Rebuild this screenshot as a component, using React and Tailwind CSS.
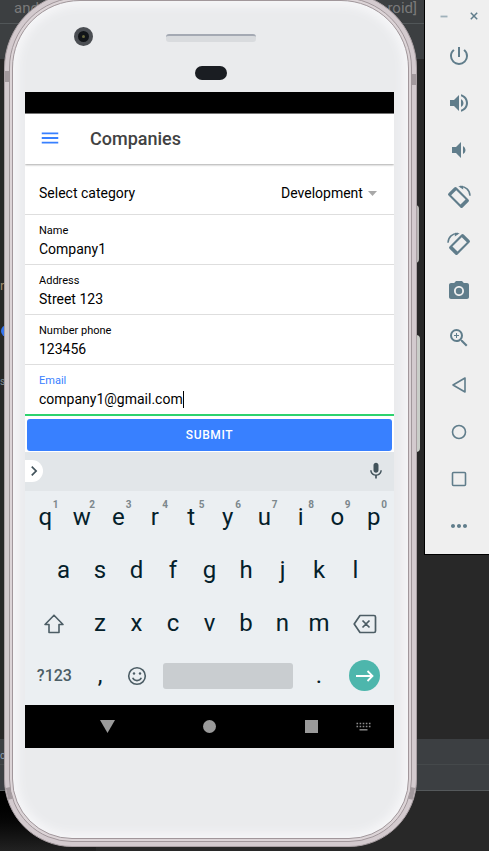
import { useState } from "react";
import {
  MdCameraAlt,
  MdChevronRight,
  MdMenu,
  MdMic,
  MdMoreHoriz,
  MdPowerSettingsNew,
  MdVolumeDown,
  MdVolumeUp,
  MdZoomIn,
} from "react-icons/md";

function Desktop() {
  return (
    <div className="absolute inset-0 overflow-hidden bg-[#282828]">
      <div className="absolute inset-x-0 top-0 h-[59px] bg-[#3c3f41]">
        <div className="flex justify-between pl-[14px] pr-[72px] text-[15px] leading-4 text-[#7a7a7a]">
          <span>and</span>
          <span>roid]</span>
        </div>
        <div className="mt-[7px] h-px bg-[#515658]" />
      </div>
      <span className="absolute left-0 top-[276px] text-[13px] text-[#a18a6c]">r</span>
      <span className="absolute left-px top-[325px] size-3 rounded-full bg-[#3574f0]" />
      <span className="absolute left-0 top-[374px] text-[10px] text-[#7d8a94]">s</span>
      <div className="absolute inset-x-0 top-[739px] h-[52px] border-b border-[#55595b] bg-[#3c3f42]">
        <div className="h-[26px] border-b border-[#45494b]" />
      </div>
      <span className="absolute left-0 top-[748px] text-[10px] text-[#8b9bb0]">o</span>
      <div className="absolute bottom-0 left-0 top-[791px] w-24 bg-linear-to-b from-black to-[#222]" />
    </div>
  );
}

function RotateIcon({ flip }) {
  return (
    <svg width="24" height="24" viewBox="0 0 24 24" className={flip ? "-scale-x-100" : ""} aria-hidden="true">
      <g transform="rotate(-45 11.5 12.5)">
        <path
          fill="currentColor"
          fillRule="evenodd"
          d="M7.4 2.500h8.200a1.600 1.600 0 0 1 1.600 1.600v16.800a1.600 1.600 0 0 1-1.600 1.600h-8.200a1.600 1.600 0 0 1-1.600-1.600V4.100a1.600 1.600 0 0 1 1.600-1.600zM7.900 5.700v13.200h7.200V5.700z"
        />
      </g>
      <path d="M13 1.600C18.500 1.200 22.800 5 23 10.800" fill="none" stroke="currentColor" strokeWidth="1.500" />
      <path d="M11.300 1.300l4.700-.600.200 3.800z" fill="currentColor" />
    </svg>
  );
}

function OutlineIcon({ children }) {
  return (
    <svg width="24" height="24" viewBox="0 0 24 24" fill="none" stroke="currentColor" strokeWidth="1.600" strokeLinejoin="round" aria-hidden="true">
      {children}
    </svg>
  );
}

const tools = [
  ["Power", <MdPowerSettingsNew size={24} />],
  ["Volume up", <MdVolumeUp size={24} />],
  ["Volume down", <MdVolumeDown size={24} />],
  ["Rotate left", <RotateIcon />],
  ["Rotate right", <RotateIcon flip />],
  ["Take screenshot", <MdCameraAlt size={24} />],
  ["Zoom", <MdZoomIn size={24} />],
  ["Back", <OutlineIcon><path d="M18 5v14L6 12z" /></OutlineIcon>],
  ["Home", <OutlineIcon><circle cx="12" cy="12" r="6.500" /></OutlineIcon>],
  ["Overview", <OutlineIcon><rect x="5.500" y="5.500" width="13" height="13" rx="1" /></OutlineIcon>],
  ["More", <MdMoreHoriz size={24} />],
];

function EmulatorToolbar() {
  return (
    <aside className="w-[65px] shrink-0 self-start border-b border-l border-black bg-[#efefef] pb-[5px] pl-1 text-[#607d8b]">
      <div className="grid h-8 grid-cols-2">
        <button aria-label="Minimize" className="flex items-center justify-center">
          <svg width="8" height="8" viewBox="0 0 8 8" aria-hidden="true">
            <path d="M.5 4.500h7" stroke="#9fb1ba" strokeWidth="1.800" />
          </svg>
        </button>
        <button aria-label="Close" className="flex items-center justify-center">
          <svg width="8" height="8" viewBox="0 0 8 8" aria-hidden="true">
            <path d="M.8.8l6.400 6.400M7.200.8L.8 7.200" stroke="currentColor" strokeWidth="1.500" />
          </svg>
        </button>
      </div>
      {tools.map(([name, icon]) => (
        <button key={name} aria-label={name} className="flex h-[47px] w-full items-center justify-center">
          {icon}
        </button>
      ))}
    </aside>
  );
}

function Field({ id, label, type = "text", value, onChange, active }) {
  return (
    <div className={`pl-[14px] pt-[9px] ${active ? "h-[51px] border-b-2 border-[#2dd36f]" : "h-[50px] border-b border-[#dedede]"}`}>
      <label htmlFor={id} className={`block text-[11px] leading-[14px] ${active ? "text-[#3880ff]" : "text-black"}`}>
        {label}
      </label>
      <div className="flex h-[22px] items-center">
        <input
          id={id}
          type={type}
          value={value}
          onChange={(e) => onChange(e.target.value)}
          className="field-sizing-content min-w-0 max-w-full bg-transparent text-[14px] leading-5 text-black outline-none"
        />
        {active && <span className="h-[17px] w-px bg-black" />}
      </div>
    </div>
  );
}

function CompanyForm() {
  const [form, setForm] = useState({
    name: "Company1",
    address: "Street 123",
    phone: "123456",
    email: "company1@gmail.com",
  });
  const set = (key) => (value) => setForm({ ...form, [key]: value });
  return (
    <form className="bg-white pt-[5px]" onSubmit={(e) => e.preventDefault()}>
      <div className="flex h-[46px] items-center justify-between border-b border-[#dedede] pl-[14px] pr-[17px] pt-1 text-[14px] text-black">
        <label htmlFor="category">Select category</label>
        <div className="flex items-center gap-[5px]">
          <select id="category" className="appearance-none bg-transparent outline-none">
            <option>Development</option>
          </select>
          <svg width="9" height="5" viewBox="0 0 9 5" aria-hidden="true">
            <path d="M0 0h9L4.500 5z" fill="#a8a8a8" />
          </svg>
        </div>
      </div>
      <Field id="name" label="Name" value={form.name} onChange={set("name")} />
      <Field id="address" label="Address" value={form.address} onChange={set("address")} />
      <Field id="phone" label="Number phone" type="tel" value={form.phone} onChange={set("phone")} />
      <Field id="email" label="Email" value={form.email} onChange={set("email")} active />
      <div className="px-0.5 pb-px pt-[3px]">
        <button type="submit" className="block h-8 w-full rounded-[3px] bg-[#3880ff] text-[12px] font-medium tracking-wider text-white">
          SUBMIT
        </button>
      </div>
    </form>
  );
}

const letter = "relative col-span-2 flex items-center justify-center pb-0.5 text-[24px] leading-none text-[#04202a]";
const wide = "col-span-3 flex items-center justify-center text-[#4c5d65]";

function Keyboard() {
  return (
    <section aria-label="Keyboard" className="bg-[#ebeff2]">
      <div className="flex h-[39px] items-center justify-between bg-[#e2e6e9] pb-px pr-2 text-[#42535b]">
        <button aria-label="Expand" className="flex h-[22px] w-[18px] items-center justify-center rounded-r-full bg-white">
          <MdChevronRight size={20} className="shrink-0" />
        </button>
        <button aria-label="Voice input">
          <MdMic size={20} />
        </button>
      </div>
      <div className="px-0.5 pb-0.5">
        <div className="grid h-[53px] grid-cols-20">
          {[..."qwertyuiop"].map((key, i) => (
            <button key={key} className={letter}>
              {key}
              <span className="absolute right-[5px] top-[9px] text-[10px] font-bold text-[#7c878c]">{(i + 1) % 10}</span>
            </button>
          ))}
        </div>
        <div className="grid h-[53px] grid-cols-20">
          {[..."asdfghjkl"].map((key) => (
            <button key={key} className={`${letter} first:col-start-2`}>{key}</button>
          ))}
        </div>
        <div className="grid h-[53px] grid-cols-20">
          <button aria-label="Shift" className={wide}>
            <svg width="22" height="20" viewBox="0 0 22 20" fill="none" stroke="currentColor" strokeWidth="1.600" strokeLinejoin="round" aria-hidden="true">
              <path d="M11 1.200L20 10.500h-4V18.500H6V10.500H2z" />
            </svg>
          </button>
          {[..."zxcvbnm"].map((key) => (
            <button key={key} className={letter}>{key}</button>
          ))}
          <button aria-label="Delete" className={wide}>
            <svg width="24" height="20" viewBox="0 0 24 20" fill="none" stroke="currentColor" strokeWidth="1.700" strokeLinejoin="round" aria-hidden="true">
              <path d="M7 1.500h14a1.500 1.500 0 0 1 1.500 1.500v14a1.500 1.500 0 0 1-1.500 1.500H7L1.200 10zM9.500 6.500l7 7M16.500 6.500l-7 7" />
            </svg>
          </button>
        </div>
        <div className="grid h-[53px] grid-cols-20 pb-0.5">
          <button className={`${wide} text-[16px] font-medium`}>?123</button>
          <button className={letter}>,</button>
          <button aria-label="Emoji" className="col-span-2 flex items-center justify-center text-[#4c5d65]">
            <svg width="20" height="20" viewBox="0 0 20 20" fill="none" stroke="currentColor" strokeWidth="1.600" aria-hidden="true">
              <circle cx="10" cy="10" r="8.300" />
              <path d="M5.700 11.800a4.700 4.700 0 0 0 8.600 0" />
              <circle cx="7" cy="7.500" r="1.200" fill="currentColor" stroke="none" />
              <circle cx="13" cy="7.500" r="1.200" fill="currentColor" stroke="none" />
            </svg>
          </button>
          <button aria-label="Space" className="col-span-8 mx-2 h-[26px] self-center rounded-[3px] bg-[#c9cdd0]" />
          <button className={letter}>.</button>
          <button aria-label="Next" className={wide}>
            <span className="flex size-[31px] items-center justify-center rounded-full bg-[#4db6ac] text-white">
              <svg width="18" height="12" viewBox="0 0 18 12" fill="none" stroke="currentColor" strokeWidth="1.800" aria-hidden="true">
                <path d="M0 6h16.500M11.500 1l5 5-5 5" />
              </svg>
            </span>
          </button>
        </div>
      </div>
    </section>
  );
}

function NavigationBar() {
  const item = "flex h-full w-[50px] items-center justify-center";
  return (
    <nav className="flex h-[43px] items-center bg-black pl-[57px] pr-1.5">
      <div className="flex h-full flex-1 justify-between">
        <button aria-label="Hide keyboard" className={item}>
          <svg width="15" height="13" viewBox="0 0 15 13" aria-hidden="true">
            <path d="M0 0h15L7.500 13z" fill="#9a9a9a" />
          </svg>
        </button>
        <button aria-label="Home screen" className={item}>
          <span className="size-[13px] rounded-full bg-[#9a9a9a]" />
        </button>
        <button aria-label="Recent apps" className={item}>
          <span className="size-[13px] bg-[#9a9a9a]" />
        </button>
      </div>
      <button aria-label="Switch keyboard" className={`${item} ml-0.5`}>
        <svg width="15" height="9" viewBox="0 0 15 9" fill="none" stroke="#8e8e8e" aria-hidden="true">
          <path d="M.5 1.500h14M.5 4.500h14" strokeWidth="1.500" strokeDasharray="1.600 1.500" />
          <path d="M3.500 7.800h8" strokeWidth="1.400" />
        </svg>
      </button>
    </nav>
  );
}

function Phone() {
  const band = "absolute w-[8px] bg-[#a39a9e]";
  return (
    <div className="relative z-10 -mt-2 mb-1 ml-1 mr-[7px] flex-1">
      <span className="absolute -right-0.5 top-[213px] h-[58px] w-1 rounded-r-sm bg-[#b9b8b6]" />
      <span className="absolute -right-[3px] top-[343px] h-[117px] w-1 rounded-r-sm bg-[#c9cdc8]" />
      <div className="relative rounded-b-[68px] rounded-t-[76px] border border-[#aaa0a4] bg-[#d3cace] p-1">
        <span className={`${band} left-0 top-[78px] h-[11px]`} />
        <span className={`${band} right-0 top-[81px] h-[11px]`} />
        <span className={`${band} left-[2px] top-[794px] h-[12px] -rotate-12`} />
        <span className={`${band} right-[2px] top-[794px] h-[12px] rotate-12`} />
        <div className="relative rounded-b-[63px] rounded-t-[71px] border border-[#a1979b] bg-[#dcd4d7] p-0.5">
          <div className="rounded-b-[60px] rounded-t-[68px] border border-[#a1979b] bg-[#eaebed] pl-3 pr-[14px] shadow-[inset_0_0_10px_5px_#f6f6f8]">
            <div className="-ml-3 -mr-[14px] h-[91px] pt-[26px]">
              <div className="grid grid-cols-[1fr_90px_1fr] items-center">
                <span className="ml-[61px] flex size-[19px] items-center justify-center rounded-full border-4 border-[#4b4e53] bg-[#111418]">
                  <span className="size-[3px] rounded-full bg-[#66653c]" />
                </span>
                <span className="mt-0.5 h-2 rounded-[3px] border-t-2 border-[#a4a9b3] bg-[#d9dbde]" />
              </div>
              <div className="mx-auto mt-5 h-[14px] w-8 rounded-full bg-[#1a1d22]" />
            </div>
            <main className="overflow-hidden bg-white">
              <div className="h-[22px] border-b border-[#777] bg-black" />
              <header className="relative flex h-[50px] items-center bg-white pb-0.5 pl-[14px] shadow-[0_1px_2px_#0005]">
                <button aria-label="Menu" className="text-[#3880ff]">
                  <MdMenu size={22} />
                </button>
                <h1 className="pl-[29px] text-[18px] font-medium text-[#424242]">Companies</h1>
              </header>
              <CompanyForm />
              <Keyboard />
              <NavigationBar />
            </main>
            <div className="h-[90px]" />
          </div>
        </div>
      </div>
    </div>
  );
}

export default function App() {
  return (
    <div className="relative flex min-h-screen items-start overflow-hidden font-['Roboto',sans-serif]">
      <Desktop />
      <Phone />
      <div className="relative z-10 shrink-0">
        <EmulatorToolbar />
      </div>
    </div>
  );
}
